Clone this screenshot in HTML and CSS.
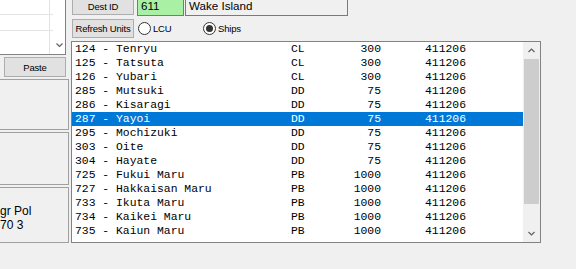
FILE: index.html
```html
<!DOCTYPE html>
<html lang="en">
<head>
    <meta charset="UTF-8">
    <title>Units</title>
    <link rel="stylesheet" href="styles.css">
</head>
<body>
    <div class="left">
        <div class="grid">
            <div class="cells">
                <div class="cell first"></div>
                <div class="cell first"></div>
                <div class="cell second"></div>
                <div class="cell second"></div>
                <div class="cell"></div>
                <div class="cell"></div>
            </div>
            <div class="vscroll small">
                <div class="track"></div>
                <div class="arrow">
                    <svg width="7" height="5" viewBox="0 0 7 5"><polyline points="0.5,0.5 3.5,3.5 6.5,0.5" fill="none" stroke="#606060" stroke-width="1.2"/></svg>
                </div>
            </div>
        </div>
        <button class="btn paste">Paste</button>
        <div class="panel p1"></div>
        <div class="panel p2"></div>
        <div class="panel p3">
            <div class="ptext">gr Pol</div>
            <div class="ptext">70 3</div>
        </div>
    </div>

    <div class="right">
        <div class="top-row">
            <button class="btn dest">Dest ID</button>
            <div class="field green">611</div>
            <div class="field name">Wake Island</div>
        </div>
        <div class="opt-row">
            <button class="btn refresh">Refresh Units</button>
            <label class="radio lcu"><span class="circle"></span>LCU</label>
            <label class="radio on"><span class="circle"></span>Ships</label>
        </div>
        <div class="listbox">
            <div class="rows">
                <div class="row"><span>124 - Tenryu</span><span>CL</span><span class="qty">300</span><span class="date">411206</span></div>
                <div class="row"><span>125 - Tatsuta</span><span>CL</span><span class="qty">300</span><span class="date">411206</span></div>
                <div class="row"><span>126 - Yubari</span><span>CL</span><span class="qty">300</span><span class="date">411206</span></div>
                <div class="row"><span>285 - Mutsuki</span><span>DD</span><span class="qty">75</span><span class="date">411206</span></div>
                <div class="row"><span>286 - Kisaragi</span><span>DD</span><span class="qty">75</span><span class="date">411206</span></div>
                <div class="row selected"><span>287 - Yayoi</span><span>DD</span><span class="qty">75</span><span class="date">411206</span></div>
                <div class="row"><span>295 - Mochizuki</span><span>DD</span><span class="qty">75</span><span class="date">411206</span></div>
                <div class="row"><span>303 - Oite</span><span>DD</span><span class="qty">75</span><span class="date">411206</span></div>
                <div class="row"><span>304 - Hayate</span><span>DD</span><span class="qty">75</span><span class="date">411206</span></div>
                <div class="row"><span>725 - Fukui Maru</span><span>PB</span><span class="qty">1000</span><span class="date">411206</span></div>
                <div class="row"><span>727 - Hakkaisan Maru</span><span>PB</span><span class="qty">1000</span><span class="date">411206</span></div>
                <div class="row"><span>733 - Ikuta Maru</span><span>PB</span><span class="qty">1000</span><span class="date">411206</span></div>
                <div class="row"><span>734 - Kaikei Maru</span><span>PB</span><span class="qty">1000</span><span class="date">411206</span></div>
                <div class="row"><span>735 - Kaiun Maru</span><span>PB</span><span class="qty">1000</span><span class="date">411206</span></div>
            </div>
            <div class="vscroll">
                <div class="arrow">
                    <svg width="7" height="5" viewBox="0 0 7 5"><polyline points="0.5,4 3.5,1 6.5,4" fill="none" stroke="#606060" stroke-width="1.2"/></svg>
                </div>
                <div class="track"><div class="thumb"></div></div>
                <div class="arrow">
                    <svg width="7" height="5" viewBox="0 0 7 5"><polyline points="0.5,1 3.5,4 6.5,1" fill="none" stroke="#606060" stroke-width="1.2"/></svg>
                </div>
            </div>
        </div>
    </div>
</body>
</html>
```

FILE: styles.css
```css
body {
    margin: 0;
    padding: 0;
    width: 576px;
    height: 269px;
    overflow: hidden;
    background: #f0f0f0;
    display: flex;
    align-items: flex-start;
    font-family: "Liberation Sans", Arial, sans-serif;
    font-size: 9.5px;
    color: #000;
}

.left {
    width: 69px;
    display: flex;
    flex-direction: column;
    align-items: flex-start;
}

.grid {
    margin-top: -20px;
    margin-left: -20px;
    width: 86px;
    height: 75px;
    box-sizing: border-box;
    border-right: 1px solid #828282;
    border-bottom: 1px solid #828282;
    background: #fff;
    display: flex;
}

.cells {
    flex: 1;
    display: grid;
    grid-template-columns: 70px 1fr;
    grid-template-rows: 35px 16px 1fr;
}

.cell {
    border-bottom: 1px solid #e3e3e3;
}

.cell:nth-child(odd) {
    border-right: 1px solid #e3e3e3;
}

.cell:nth-child(5),
.cell:nth-child(6) {
    border-bottom: none;
}

.vscroll {
    width: 17px;
    background: #f0f0f0;
    display: flex;
    flex-direction: column;
}

.vscroll.small {
    width: 12px;
    background: #fff;
}

.vscroll .arrow {
    height: 17px;
    display: flex;
    align-items: center;
    justify-content: center;
}

.vscroll .track {
    flex: 1;
}

.thumb {
    margin: 0 1px;
    height: 145px;
    background: #cdcdcd;
}

.btn {
    font-family: "Liberation Sans", Arial, sans-serif;
    font-size: 9.5px;
    letter-spacing: -0.2px;
    color: #000;
    background: #e1e1e1;
    border: 1px solid #adadad;
    padding: 0;
    box-sizing: border-box;
}

.paste {
    margin-top: 2px;
    margin-left: 4px;
    width: 62px;
    height: 20px;
}

.panel {
    margin-top: 2px;
    margin-left: -10px;
    width: 79px;
    box-sizing: border-box;
    border: 1px solid #a0a0a0;
}

.p1 { height: 51px; }
.p2 { height: 53px; }

.p3 {
    height: 56px;
    padding: 16px 0 0 9px;
}

.ptext {
    font-size: 12px;
    line-height: 14px;
    white-space: nowrap;
}

.right {
    margin-left: 2px;
    display: flex;
    flex-direction: column;
}

.top-row {
    margin-top: -5px;
    height: 21px;
    display: flex;
    align-items: flex-start;
}

.dest {
    margin-left: 1px;
    width: 62px;
    height: 20px;
    padding-top: 3px;
}

.field {
    height: 21px;
    box-sizing: border-box;
    border: 1px solid #7a7a7a;
    padding: 3px 0 0 3px;
    font-size: 11.6px;
    line-height: 14px;
}

.green {
    margin-left: 3px;
    width: 47px;
    background: #a9f0a5;
}

.name {
    margin-left: 1px;
    width: 163px;
}

.opt-row {
    margin-top: 3px;
    height: 19px;
    display: flex;
    align-items: center;
}

.refresh {
    margin-left: 1px;
    width: 62px;
    height: 19px;
}

.radio {
    display: flex;
    align-items: center;
    gap: 2px;
    letter-spacing: -0.2px;
    margin-left: 4px;
}

.radio.lcu {
    width: 61px;
}

.circle {
    width: 13px;
    height: 13px;
    box-sizing: border-box;
    border: 1px solid #333;
    border-radius: 50%;
    background: #fff;
    display: flex;
    align-items: center;
    justify-content: center;
}

.radio.on .circle::after {
    content: "";
    width: 7px;
    height: 7px;
    border-radius: 50%;
    background: #333;
}

.listbox {
    margin-top: 3px;
    width: 470px;
    height: 202px;
    box-sizing: border-box;
    border: 1px solid #828282;
    background: #fff;
    display: flex;
}

.rows {
    flex: 1;
    font-family: "Liberation Mono", "Courier New", monospace;
    font-size: 11.4px;
    line-height: 14px;
}

.row {
    height: 14px;
    padding-left: 3px;
    display: grid;
    grid-template-columns: 216px 38px 52px 1fr;
    white-space: pre;
}

.row .qty {
    text-align: right;
}

.row .date {
    padding-left: 44px;
}

.row.selected {
    background: #0078d7;
    color: #fff;
}
```
